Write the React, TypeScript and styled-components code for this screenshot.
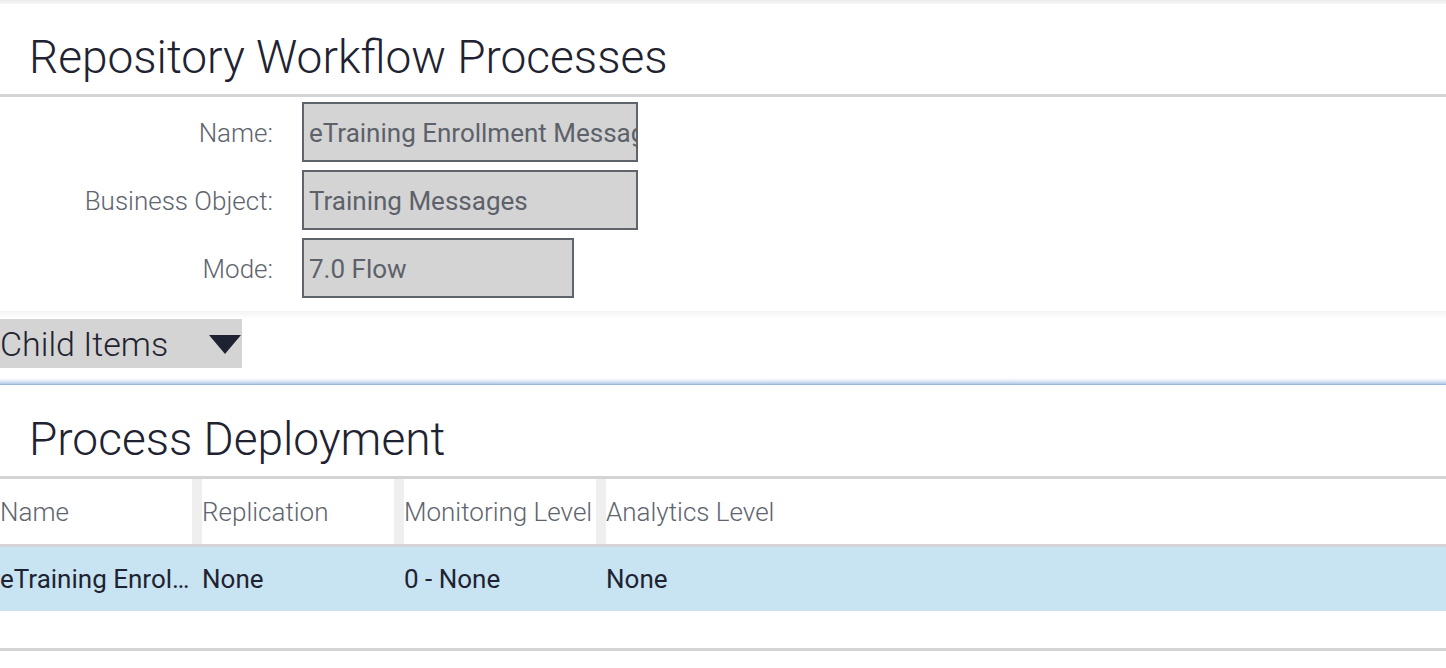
import React from "react";
import styled, { createGlobalStyle } from "styled-components";

const Global = createGlobalStyle`
  html, body { margin: 0; padding: 0; background: #ffffff; }
  body { font-family: Roboto, "Liberation Sans", sans-serif; color: #1f2331; }
  * { box-sizing: border-box; }
`;

const Page = styled.div`
  width: 1446px;
  height: 668px;
  overflow: hidden;
  display: flex;
  flex-direction: column;
`;

const TopShade = styled.div`
  height: 4px;
  background: linear-gradient(#ebebeb, #f7f7f7);
`;

const SectionTitle = styled.h1<{ $h: number }>`
  margin: 0;
  height: ${(p) => p.$h}px;
  padding: 0 0 14px 29px;
  display: flex;
  align-items: flex-end;
  font-family: Roboto, "Liberation Sans", sans-serif;
  font-weight: 300;
  font-size: 46px;
  line-height: 1;
  color: #1f2331;
`;

const Rule = styled.div`
  height: 3px;
  background: #d4d4d4;
`;

const Form = styled.div`
  display: grid;
  grid-template-columns: 275px auto;
  column-gap: 27px;
  row-gap: 8px;
  padding: 5px 0 13px 0;
  align-items: center;
  justify-items: start;
`;

const Label = styled.div`
  justify-self: end;
  font-size: 26px;
  font-weight: 300;
  color: #5e646e;
  padding: 2px 2px 0 0;
`;

const Field = styled.div<{ $w: number }>`
  width: ${(p) => p.$w}px;
  height: 60px;
  background: #d4d4d4;
  border: 2px solid #5f636b;
  display: flex;
  align-items: center;
  padding: 2px 0 0 5px;
  font-size: 26px;
  color: #5c616a;
  white-space: nowrap;
  overflow: hidden;
`;

const SoftShade = styled.div`
  height: 8px;
  background: linear-gradient(#f3f3f3, #ffffff);
`;

const ChildBar = styled.div`
  display: flex;
  height: 59px;
  align-items: flex-start;
`;

const ChildButton = styled.div`
  width: 242px;
  height: 49px;
  background: #d4d4d4;
  display: flex;
  align-items: center;
  justify-content: space-between;
  padding: 0 1px 0 0;
  font-size: 34px;
  font-weight: 300;
  color: #1f2331;
`;

const Caret = styled.svg`
  width: 32px;
  height: 20px;
  margin-top: 2px;
`;

const BlueEdge = styled.div`
  height: 7px;
  background: linear-gradient(#ffffff 0%, #dfe9f5 45%, #b6cde8 80%, #8cb0da 100%);
`;

const Table = styled.div`
  display: flex;
  flex-direction: column;
`;

const Row = styled.div<{ $selected?: boolean }>`
  display: grid;
  grid-template-columns: 202px 202px 202px 1fr;
  height: ${(p) => (p.$selected ? 64 : 65)}px;
  background: ${(p) => (p.$selected ? "#c8e4f2" : "#ffffff")};
`;

const HeadCell = styled.div<{ $sep?: boolean }>`
  display: flex;
  align-items: center;
  font-size: 26px;
  font-weight: 300;
  color: #5e646e;
  white-space: nowrap;
  overflow: hidden;
  border-right: ${(p) => (p.$sep ? "10px solid #efefef" : "none")};
`;

const Cell = styled.div`
  display: flex;
  align-items: center;
  padding: 0 10px 0 0;
  font-size: 26px;
  color: #1f2331;
  white-space: nowrap;
  overflow: hidden;
`;

const CellText = styled.span`
  overflow: hidden;
  text-overflow: ellipsis;
  white-space: nowrap;
`;

const Spacer = styled.div`
  height: 37px;
`;

export default function App() {
  return (
    <Page>
      <Global />
      <TopShade />
      <SectionTitle $h={90}>Repository Workflow Processes</SectionTitle>
      <Rule />
      <Form>
        <Label>Name:</Label>
        <Field $w={336}>eTraining Enrollment Messages</Field>
        <Label>Business Object:</Label>
        <Field $w={336}>Training Messages</Field>
        <Label>Mode:</Label>
        <Field $w={272}>7.0 Flow</Field>
      </Form>
      <SoftShade />
      <ChildBar>
        <ChildButton>
          <span>Child Items</span>
          <Caret viewBox="0 0 32 20">
            <polygon points="0,0 32,0 16,19" fill="#1f2331" />
          </Caret>
        </ChildButton>
      </ChildBar>
      <BlueEdge />
      <SectionTitle $h={91}>Process Deployment</SectionTitle>
      <Rule />
      <Table>
        <Row>
          <HeadCell $sep>Name</HeadCell>
          <HeadCell $sep>Replication</HeadCell>
          <HeadCell $sep>Monitoring Level</HeadCell>
          <HeadCell>Analytics Level</HeadCell>
        </Row>
        <Rule />
        <Row $selected>
          <Cell><CellText>eTraining Enrollment Messages</CellText></Cell>
          <Cell><CellText>None</CellText></Cell>
          <Cell><CellText>0 - None</CellText></Cell>
          <Cell><CellText>None</CellText></Cell>
        </Row>
        <Spacer />
        <Rule />
      </Table>
    </Page>
  );
}
